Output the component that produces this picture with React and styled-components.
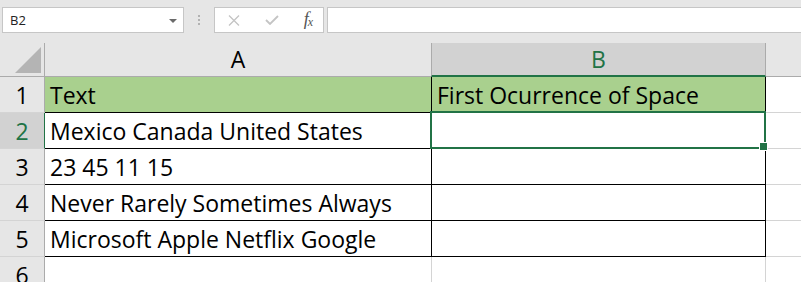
import React from 'react';
import styled, { createGlobalStyle } from 'styled-components';

const GREEN = '#217346';
const GRID = '#d4d4d4';
const HEAD_EDGE = '#ababab';

const rows = [
    { n: 1, a: 'Text', b: 'First Ocurrence of Space', fill: true },
    { n: 2, a: 'Mexico Canada United States', b: '', selected: true },
    { n: 3, a: '23 45 11 15', b: '' },
    { n: 4, a: 'Never Rarely Sometimes Always', b: '' },
    { n: 5, a: 'Microsoft Apple Netflix Google', b: '' },
];

const Global = createGlobalStyle`
    html, body { margin: 0; padding: 0; background: #fff; overflow: hidden; }
    * { box-sizing: border-box; }
`;

const Page = styled.div`
    width: 801px;
    height: 282px;
    display: flex;
    flex-direction: column;
    overflow: hidden;
    font-family: "Open Sans", "Liberation Sans", sans-serif;
`;

const Toolbar = styled.div`
    height: 43px;
    flex: none;
    background: #e6e6e6;
    display: flex;
    align-items: flex-start;
    padding: 7px 0 0 2px;
`;

const Box = styled.div`
    height: 26px;
    background: #fff;
    border: 1px solid #c6c6c6;
    display: flex;
    align-items: center;
`;

const NameBox = styled(Box)`
    width: 182px;
    padding: 0 6px 0 7px;
    justify-content: space-between;
    font-size: 13px;
    color: #222;
`;

const Arrow = styled.span`
    width: 0;
    height: 0;
    border-left: 4px solid transparent;
    border-right: 4px solid transparent;
    border-top: 4px solid #6a6a6a;
    margin-top: 1px;
`;

const Grip = styled.div`
    width: 30px;
    height: 26px;
    display: flex;
    align-items: center;
    justify-content: center;
`;

const FxBox = styled(Box)`
    width: 110px;
    padding: 0 11px 0 13px;
    justify-content: space-between;
`;

const Fx = styled.span`
    font-family: "Liberation Serif", serif;
    font-style: italic;
    font-size: 18px;
    line-height: 1;
    color: #555;
    letter-spacing: -1px;
    margin-top: -2px;
    sub { font-size: 12px; vertical-align: -1px; }
`;

const FormulaInput = styled(Box)`
    flex: 1;
    margin-left: 3px;
    border-right: none;
`;

const Sheet = styled.div`
    flex: 1;
    overflow: hidden;
    display: grid;
    grid-template-columns: 45px 387px 334px 1fr;
    grid-template-rows: 34px repeat(6, 36px);
    font-size: 23px;
    line-height: 26px;
    color: #000;
`;

const Corner = styled.div`
    background: #e6e6e6;
    border-right: 1px solid ${HEAD_EDGE};
    border-bottom: 1px solid ${HEAD_EDGE};
    display: flex;
    align-items: flex-end;
    justify-content: flex-end;
    padding: 0 3px 3px 0;
`;

const Triangle = styled.div`
    width: 0;
    height: 0;
    border-left: 26px solid transparent;
    border-bottom: 26px solid #b4b4b4;
`;

const ColHead = styled.div`
    background: ${p => (p.$active ? '#d2d2d2' : '#e6e6e6')};
    color: ${p => (p.$active ? GREEN : '#000')};
    border-left: ${p => (p.$active ? `1px solid ${HEAD_EDGE}` : 'none')};
    border-right: ${p => (p.$last ? 'none' : `1px solid ${HEAD_EDGE}`)};
    border-bottom: ${p => (p.$active ? `2px solid ${GREEN}` : `1px solid ${HEAD_EDGE}`)};
    margin-left: ${p => (p.$active ? '-1px' : '0')};
    display: flex;
    align-items: flex-end;
    justify-content: center;
    padding-bottom: ${p => (p.$active ? '3px' : '4px')};
`;

const RowHead = styled.div`
    background: ${p => (p.$active ? '#d2d2d2' : '#e6e6e6')};
    color: ${p => (p.$active ? GREEN : '#000')};
    border-right: 1px solid ${p => (p.$active ? GREEN : HEAD_EDGE)};
    border-bottom: 1px solid ${GRID};
    display: flex;
    align-items: flex-end;
    justify-content: center;
    padding-bottom: 4px;
`;

const Cell = styled.div`
    position: relative;
    background: ${p => (p.$fill ? '#a9d08e' : '#fff')};
    border-right: ${p => (p.$last ? 'none' : `1px solid ${p.$table ? '#000' : GRID}`)};
    border-bottom: 1px solid ${p => (p.$table ? '#000' : GRID)};
    display: flex;
    align-items: flex-end;
    padding: 0 0 4px 5px;
    white-space: nowrap;

    ${p => p.$selected && `
        &::after {
            content: '';
            position: absolute;
            top: -2px;
            left: -2px;
            right: -1px;
            bottom: -1px;
            border: 2px solid ${GREEN};
            pointer-events: none;
        }
        &::before {
            content: '';
            position: absolute;
            right: -3px;
            bottom: -3px;
            width: 7px;
            height: 7px;
            background: ${GREEN};
            border: 1px solid #fff;
            z-index: 2;
        }
    `}
`;

export default function App() {
    return (
        <Page>
            <Global />
            <Toolbar>
                <NameBox>
                    <span>B2</span>
                    <Arrow />
                </NameBox>
                <Grip>
                    <svg width="2" height="10" viewBox="0 0 2 10">
                        <rect x="0" y="0" width="2" height="2" fill="#b2b2b2" />
                        <rect x="0" y="4" width="2" height="2" fill="#b2b2b2" />
                        <rect x="0" y="8" width="2" height="2" fill="#b2b2b2" />
                    </svg>
                </Grip>
                <FxBox>
                    <svg width="12" height="11" viewBox="0 0 12 11">
                        <path d="M1 0.5 L11 10.5 M11 0.5 L1 10.5" stroke="#c4c4c4" strokeWidth="1.3" fill="none" />
                    </svg>
                    <svg width="14" height="10" viewBox="0 0 14 10">
                        <path d="M1 5 L5 9 L13 1" stroke="#c4c4c4" strokeWidth="1.8" fill="none" />
                    </svg>
                    <Fx>f<sub>x</sub></Fx>
                </FxBox>
                <FormulaInput />
            </Toolbar>
            <Sheet>
                <Corner><Triangle /></Corner>
                <ColHead>A</ColHead>
                <ColHead $active>B</ColHead>
                <ColHead $last />
                {rows.map(r => (
                    <React.Fragment key={r.n}>
                        <RowHead $active={r.selected}>{r.n}</RowHead>
                        <Cell $table $fill={r.fill}>{r.a}</Cell>
                        <Cell $table $fill={r.fill} $selected={r.selected}>{r.b}</Cell>
                        <Cell $last />
                    </React.Fragment>
                ))}
                <RowHead>6</RowHead>
                <Cell />
                <Cell />
                <Cell $last />
            </Sheet>
        </Page>
    );
}
